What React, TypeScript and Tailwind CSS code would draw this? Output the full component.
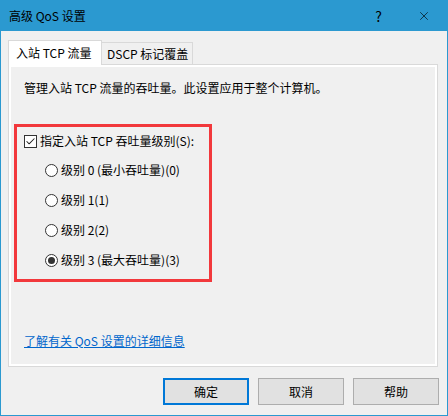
import { Check, X } from "lucide-react";

const levels = [
  { label: "级别 0 (最小吞吐量)(0)", checked: false },
  { label: "级别 1(1)", checked: false },
  { label: "级别 2(2)", checked: false },
  { label: "级别 3 (最大吞吐量)(3)", checked: true },
];

function Radio({ checked }: { checked: boolean }) {
  return (
    <span className="flex h-[13px] w-[13px] shrink-0 items-center justify-center rounded-full border border-[#333] bg-white">
      {checked && <span className="h-[7px] w-[7px] rounded-full bg-[#333]" />}
    </span>
  );
}

export default function App() {
  return (
    <div className="flex h-[416px] w-[448px] flex-col border-x border-b border-[#2b99d0] bg-[#f0f0f0] font-['Noto_Sans_CJK_SC',sans-serif] text-[12px] leading-[16px] text-black">
      {/* title bar */}
      <div className="flex h-[31px] shrink-0 items-center bg-[#2b99d0] pl-[8px]">
        <span className="flex-1">高级 QoS 设置</span>
        <span className="mr-[35px] text-[14px]">?</span>
        <X className="mr-[16px] h-[14px] w-[14px]" strokeWidth={1.1} />
      </div>

      <div className="flex flex-1 flex-col px-[7px] pt-[9px]">
        {/* tabs */}
        <div className="flex h-[24px] items-end">
          <div className="relative z-10 -mb-px flex h-[25px] w-[94px] items-start border border-b-0 border-[#d9d9d9] bg-white pl-[7px] pt-[4px]">
            入站 TCP 流量
          </div>
          <div className="flex h-[22px] w-[91px] items-center border border-l-0 border-b-0 border-[#d9d9d9] pl-[5px] pt-[1px]">
            DSCP 标记覆盖
          </div>
        </div>

        {/* panel */}
        <div className="h-[303px] w-[430px] border border-[#d9d9d9]">
          <div className="flex h-full flex-col border-2 border-white pl-[13px] pt-[13px]">
            <p>管理入站 TCP 流量的吞吐量。此设置应用于整个计算机。</p>

            <div className="-ml-[10px] mt-[28px] h-[158px] w-[198px] border-[3px] border-[#f2383c] pl-[7px] pt-[7px]">
              <label className="flex h-[14px] items-center gap-[3px]">
                <span className="flex h-[13px] w-[13px] items-center justify-center border border-[#333] bg-white">
                  <Check className="h-[11px] w-[11px]" strokeWidth={2.2} color="#222" />
                </span>
                指定入站 TCP 吞吐量级别(S):
              </label>
              <div className="ml-[21px] mt-[15px] flex flex-col gap-[16px]">
                {levels.map((l) => (
                  <label key={l.label} className="flex h-[14px] items-center gap-[3px]">
                    <Radio checked={l.checked} />
                    {l.label}
                  </label>
                ))}
              </div>
            </div>

            <a className="mt-[51px] w-fit text-[#0066cc] underline">了解有关 QoS 设置的详细信息</a>
          </div>
        </div>

        {/* buttons */}
        <div className="mr-[1px] mt-[11px] flex justify-end gap-[9px]">
          <button className="h-[27px] w-[86px] border-2 border-[#0078d7] bg-[#e1e1e1]">确定</button>
          <button className="h-[27px] w-[86px] border border-[#adadad] bg-[#e1e1e1]">取消</button>
          <button className="h-[27px] w-[86px] border border-[#adadad] bg-[#e1e1e1]">帮助</button>
        </div>
      </div>
    </div>
  );
}
